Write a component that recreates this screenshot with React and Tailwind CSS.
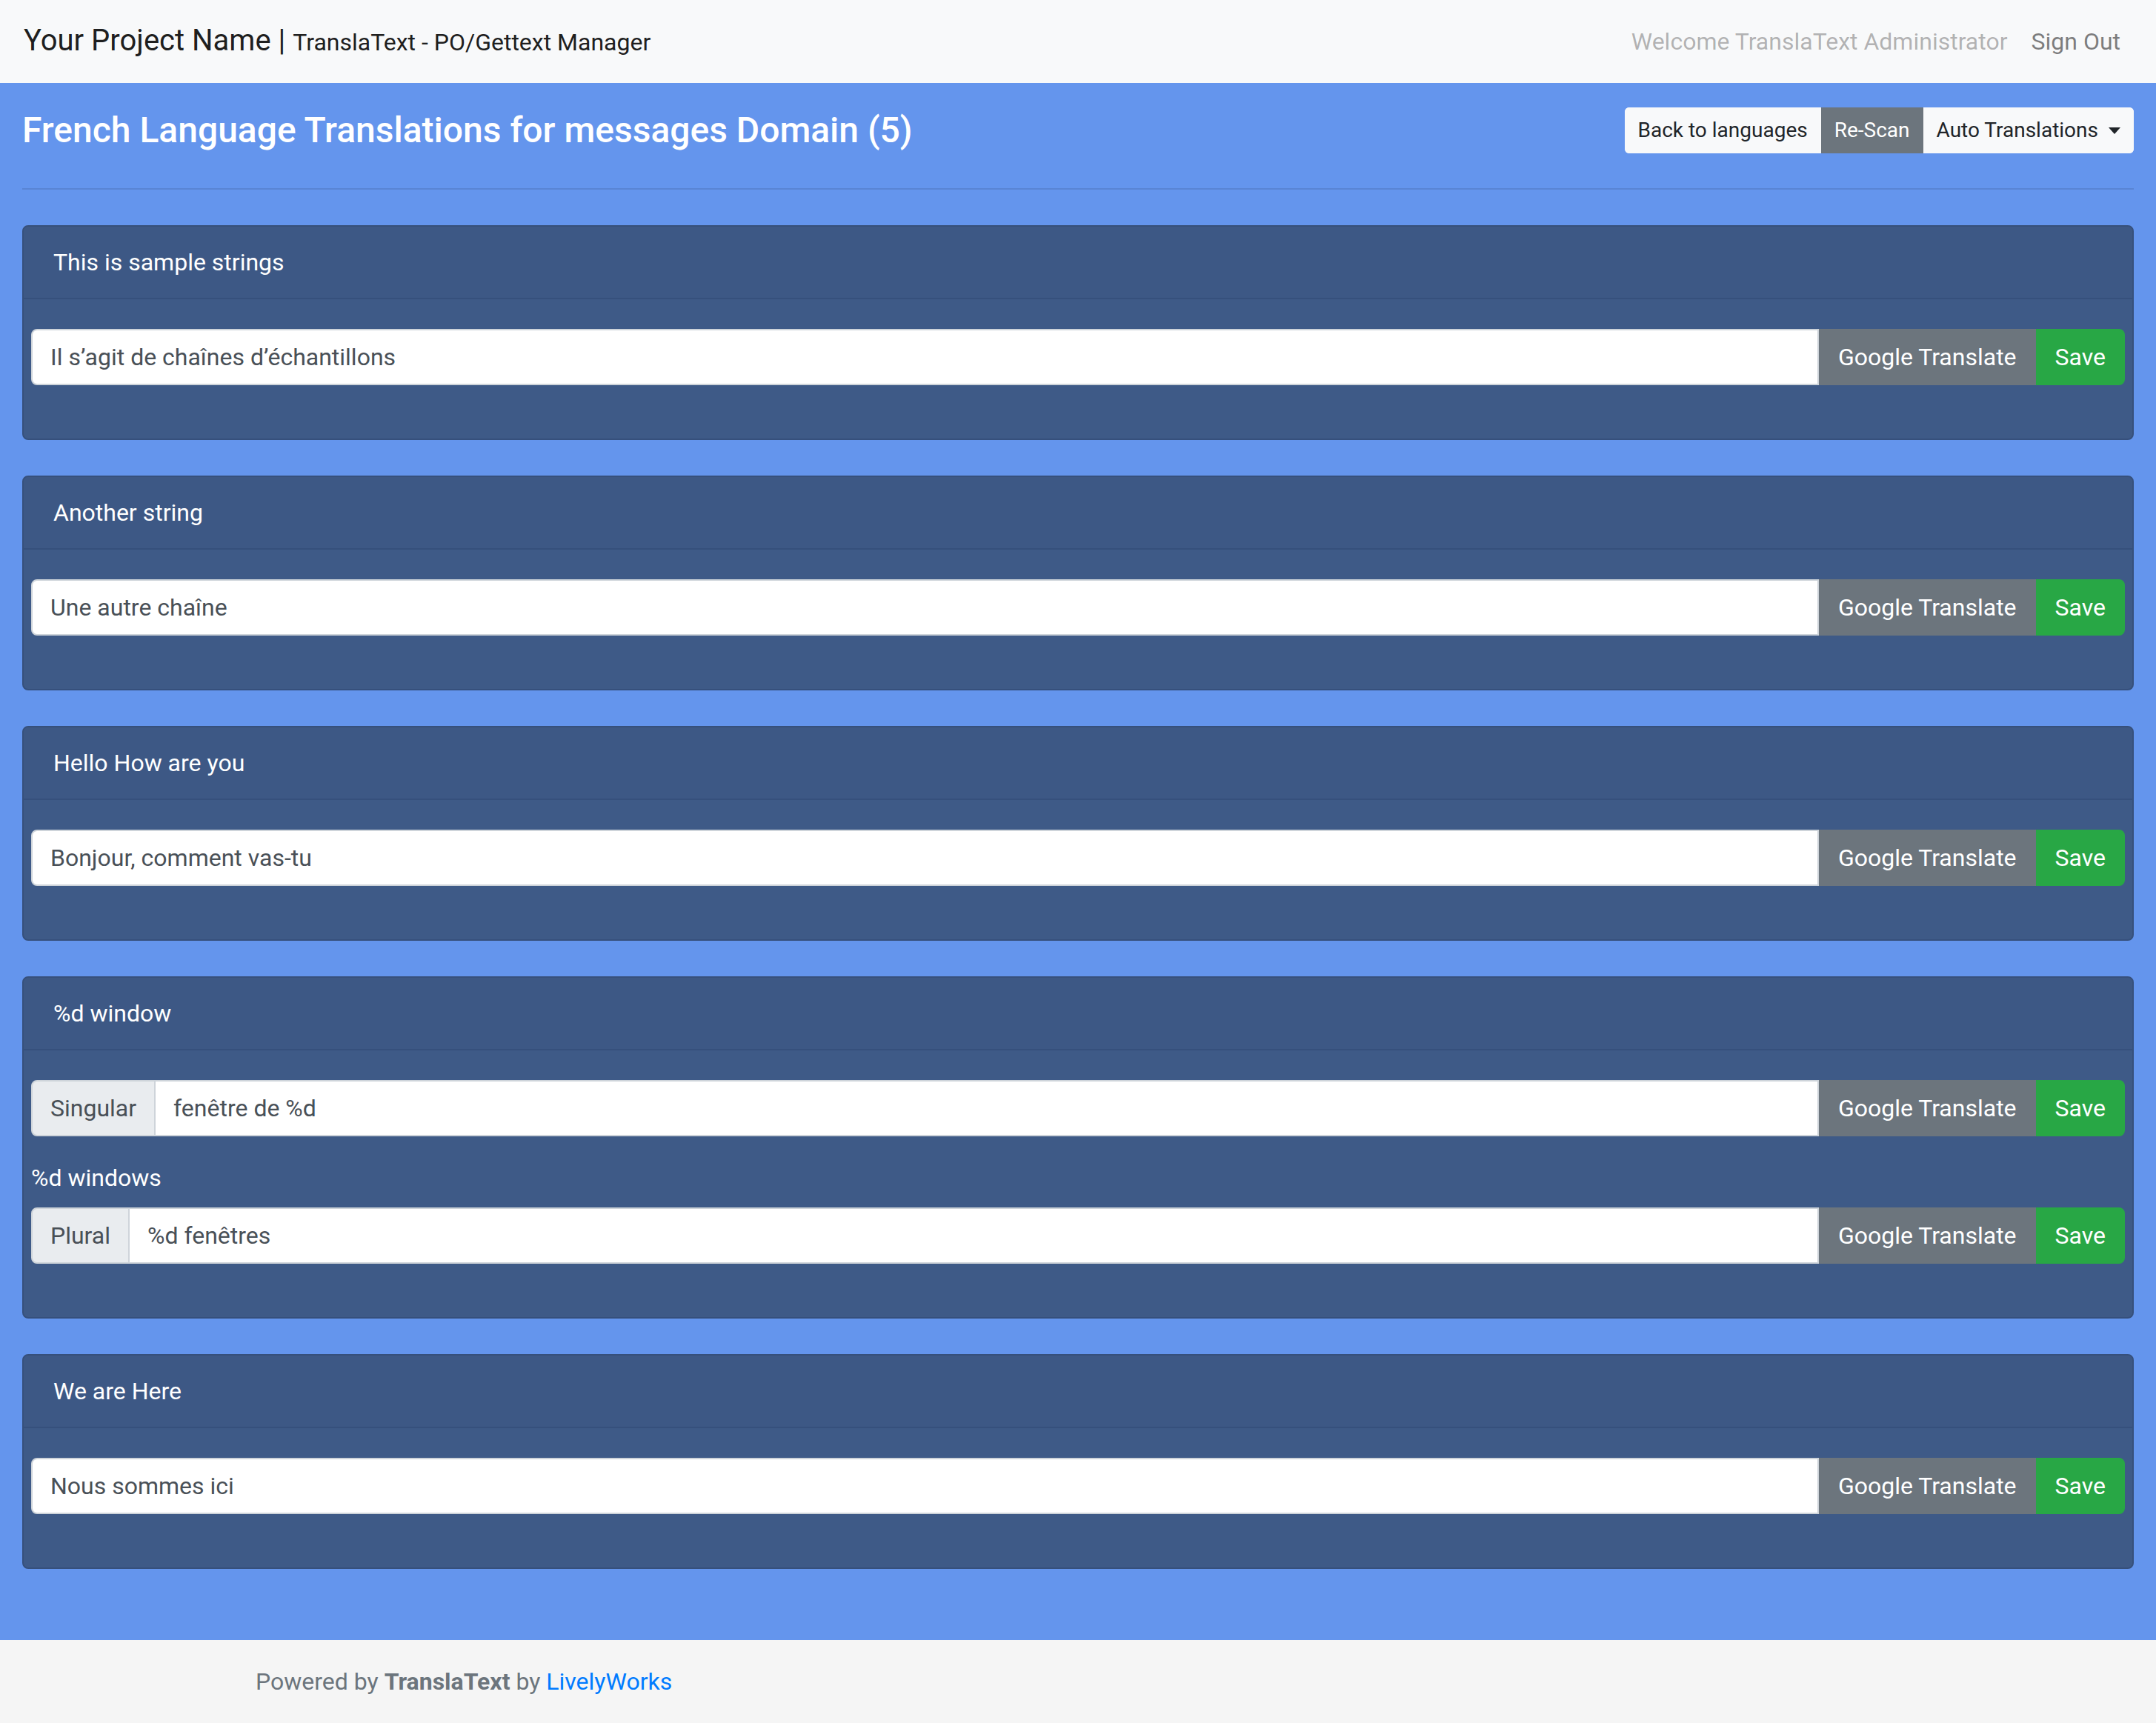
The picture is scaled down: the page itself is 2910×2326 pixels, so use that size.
import { useState } from 'react';

const entries = [
  { id: 'sample', msgid: 'This is sample strings', msgstr: 'Il s’agit de chaînes d’échantillons' },
  { id: 'another', msgid: 'Another string', msgstr: 'Une autre chaîne' },
  { id: 'hello', msgid: 'Hello How are you', msgstr: 'Bonjour, comment vas-tu' },
  {
    id: 'window',
    msgid: '%d window',
    plural: '%d windows',
    msgstr: ['fenêtre de %d', '%d fenêtres'],
  },
  { id: 'here', msgid: 'We are Here', msgstr: 'Nous sommes ici' },
];

function Navbar() {
  return (
    <nav className="flex h-[112px] items-center justify-between bg-[#f8f9fa] px-[32px]">
      <a href="#" className="whitespace-nowrap text-[40px] leading-[60px] text-black/90">
        Your Project Name | <span className="text-[32px]">TranslaText - PO/Gettext Manager</span>
      </a>
      <ul className="flex items-center text-[32px] leading-[48px]">
        <li className="px-[16px] text-black/30">Welcome TranslaText Administrator</li>
        <li>
          <a href="#" className="block px-[16px] text-black/50">
            Sign Out
          </a>
        </li>
      </ul>
    </nav>
  );
}

function Toolbar() {
  return (
    <div className="inline-flex overflow-hidden rounded-[6px] text-[28px] leading-[42px]">
      <button className="border-2 border-[#f8f9fa] bg-[#f8f9fa] px-[16px] py-[8px] text-[#212529]">
        Back to languages
      </button>
      <button className="border-2 border-[#6c757d] bg-[#6c757d] px-[16px] py-[8px] text-white">
        Re-Scan
      </button>
      <button className="flex items-center border-2 border-[#f8f9fa] bg-[#f8f9fa] px-[16px] py-[8px] text-[#212529]">
        Auto Translations
        <span className="ml-[14px] inline-block h-0 w-0 border-x-[8px] border-t-[9px] border-x-transparent border-t-[#212529]" />
      </button>
    </div>
  );
}

function TranslationInput({ prefix, value }) {
  const [text, setText] = useState(value);
  return (
    <div className="flex w-full text-[32px] leading-[48px]">
      {prefix && (
        <span className="rounded-l-[8px] border-2 border-[#ced4da] bg-[#e9ecef] px-[24px] py-[12px] text-[#495057]">
          {prefix}
        </span>
      )}
      <input
        value={text}
        onChange={(e) => setText(e.target.value)}
        className={
          'min-w-0 flex-1 border-2 border-[#ced4da] bg-white px-[24px] py-[12px] text-[#495057] outline-none ' +
          (prefix ? 'border-l-0' : 'rounded-l-[8px]')
        }
      />
      <button className="border-2 border-[#6c757d] bg-[#6c757d] px-[24px] py-[12px] text-white">
        Google Translate
      </button>
      <button className="rounded-r-[8px] border-2 border-[#28a745] bg-[#28a745] px-[24px] py-[12px] text-white">
        Save
      </button>
    </div>
  );
}

function EntryCard({ entry }) {
  const isPlural = Array.isArray(entry.msgstr);
  return (
    <div className="mb-[48px] rounded-[8px] border-2 border-[#36507c] bg-[#3e5a87]">
      <div className="rounded-t-[6px] border-b-2 border-[#36507c] bg-[#3d5885] px-[40px] py-[24px] text-[32px] leading-[48px] text-white">
        {entry.msgid}
      </div>
      <div className="px-[10px] py-[40px]">
        {isPlural ? (
          <>
            <div className="mb-[32px]">
              <TranslationInput prefix="Singular" value={entry.msgstr[0]} />
            </div>
            <div className="mb-[16px] text-[32px] leading-[48px] text-white">{entry.plural}</div>
            <div className="mb-[32px]">
              <TranslationInput prefix="Plural" value={entry.msgstr[1]} />
            </div>
          </>
        ) : (
          <div className="mb-[32px]">
            <TranslationInput value={entry.msgstr} />
          </div>
        )}
      </div>
    </div>
  );
}

export default function App() {
  return (
    <div className="flex min-h-screen flex-col font-[family-name:Roboto,sans-serif] text-[#212529]">
      <Navbar />

      <main className="flex-1 bg-[#6495ed] px-[30px] pb-[48px] pt-[32px]">
        <div className="flex h-[64px] items-center justify-between">
          <h4 className="text-[48px] font-medium leading-[58px] text-white">
            French Language Translations for messages Domain (5)
          </h4>
          <Toolbar />
        </div>
        <hr className="mb-[48px] mt-[46px] border-t-2 border-black/10" />

        {entries.map((entry) => (
          <EntryCard key={entry.id} entry={entry} />
        ))}
      </main>

      <footer className="flex h-[112px] items-center bg-[#f5f5f5]">
        <div className="mx-auto w-full max-w-[2280px] px-[30px] text-[32px] text-[#6c757d]">
          Powered by <strong className="font-bold">TranslaText</strong> by{' '}
          <a href="#" className="text-[#007bff]">
            LivelyWorks
          </a>
        </div>
      </footer>
    </div>
  );
}
